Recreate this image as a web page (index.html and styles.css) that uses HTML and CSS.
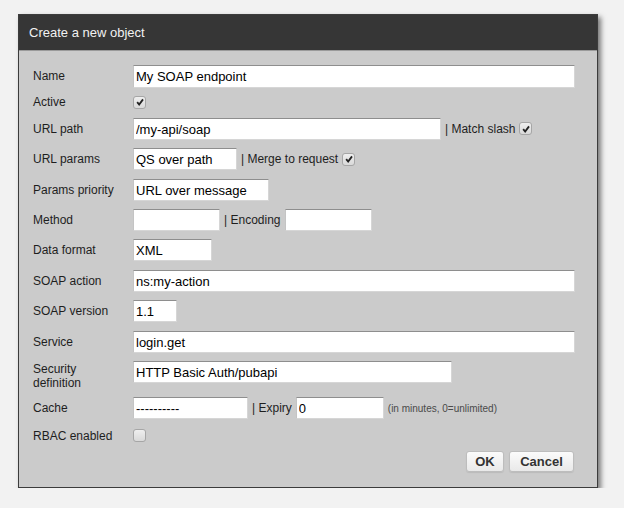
FILE: index.html
```html
<!DOCTYPE html>
<html>
<head>
<meta charset="utf-8">
<link rel="stylesheet" href="styles.css">
</head>
<body>
<div class="dialog">
  <div class="header">Create a new object</div>
  <form class="body">
    <div class="row">
      <label class="lbl">Name</label>
      <input class="inp inp-tall w-full" value="My SOAP endpoint">
    </div>
    <div class="row row-cb">
      <label class="lbl">Active</label>
      <span class="cb"><svg viewBox="0 0 12 12" width="12" height="12"><path d="M2.6 6.2 L5 9 L9.6 2.8" fill="none" stroke="#222" stroke-width="2.2"/></svg></span>
    </div>
    <div class="row">
      <label class="lbl">URL path</label>
      <input class="inp w-path" value="/my-api/soap">
      <span class="sep">| Match slash</span>
      <span class="cb"><svg viewBox="0 0 12 12" width="12" height="12"><path d="M2.6 6.2 L5 9 L9.6 2.8" fill="none" stroke="#222" stroke-width="2.2"/></svg></span>
    </div>
    <div class="row">
      <label class="lbl">URL params</label>
      <input class="inp w-params" value="QS over path">
      <span class="sep">| Merge to request</span>
      <span class="cb"><svg viewBox="0 0 12 12" width="12" height="12"><path d="M2.6 6.2 L5 9 L9.6 2.8" fill="none" stroke="#222" stroke-width="2.2"/></svg></span>
    </div>
    <div class="row">
      <label class="lbl">Params priority</label>
      <input class="inp w-prio" value="URL over message">
    </div>
    <div class="row">
      <label class="lbl">Method</label>
      <input class="inp w-method" value="">
      <span class="sep">| Encoding</span>
      <input class="inp w-method" value="">
    </div>
    <div class="row">
      <label class="lbl">Data format</label>
      <input class="inp w-format" value="XML">
    </div>
    <div class="row">
      <label class="lbl">SOAP action</label>
      <input class="inp w-full" value="ns:my-action">
    </div>
    <div class="row">
      <label class="lbl">SOAP version</label>
      <input class="inp w-ver" value="1.1">
    </div>
    <div class="row">
      <label class="lbl">Service</label>
      <input class="inp w-full" value="login.get">
    </div>
    <div class="row row-top">
      <label class="lbl">Security<br>definition</label>
      <input class="inp w-sec" value="HTTP Basic Auth/pubapi">
    </div>
    <div class="row">
      <label class="lbl">Cache</label>
      <input class="inp w-cache" value="----------">
      <span class="sep">| Expiry</span>
      <input class="inp w-expiry" value="0">
      <span class="hint">(in minutes, 0=unlimited)</span>
    </div>
    <div class="row row-cb2">
      <label class="lbl">RBAC enabled</label>
      <span class="cb"></span>
    </div>
    <div class="buttons">
      <button type="button" class="btn btn-ok">OK</button>
      <button type="button" class="btn btn-cancel">Cancel</button>
    </div>
  </form>
</div>
</body>
</html>
```

FILE: styles.css
```css
html, body {
  margin: 0;
  padding: 0;
  background: #f2f2f2;
  font-family: "Liberation Sans", Arial, sans-serif;
}

.dialog {
  box-sizing: border-box;
  width: 580px;
  margin: 14px 0 0 18px;
  border: 1px solid #3c3c3c;
  background: #cbcbcb;
  box-shadow: 3px 3px 5px rgba(0, 0, 0, 0.5);
}

.header {
  height: 35px;
  display: flex;
  align-items: center;
  padding-left: 10px;
  background: #363636;
  color: #f2f2f2;
  font-size: 13px;
  border-bottom: 1px solid #9a9a9a;
}

.body {
  margin: 0;
  padding: 14px 22px 15px 14px;
}

.row {
  display: flex;
  align-items: center;
  height: 22px;
  margin-bottom: 8.4px;
}

.row-cb {
  height: 14px;
}

.row-cb2 {
  height: 16px;
  margin-bottom: 7px;
}

.row-top {
  height: 28px;
  align-items: flex-start;
}

.lbl {
  flex: none;
  width: 100px;
  font-size: 12px;
  line-height: 14px;
  color: #1e1e1e;
}

.row-top .lbl {
  padding-top: 1px;
}

.inp {
  box-sizing: border-box;
  flex: none;
  height: 22px;
  margin: 0;
  padding: 1px 2px 0;
  font-family: "Liberation Sans", Arial, sans-serif;
  font-size: 13px;
  color: #000;
  background: #fff;
  border: 1px solid #d6d6d6;
  border-top-color: #8e8e8e;
  border-left-color: #c4c4c4;
  border-radius: 0;
  outline: none;
}

.inp-tall {
  height: 23px;
}

.w-full { width: 442px; }
.w-path { width: 308px; }
.w-params { width: 104px; }
.w-prio { width: 136px; }
.w-method { width: 87px; }
.w-format { width: 79px; }
.w-ver { width: 44px; }
.w-sec { width: 319px; }
.w-cache { width: 115px; }
.w-expiry { width: 88px; }

.sep {
  flex: none;
  margin: 0 4px 0 4px;
  font-size: 12px;
  color: #1e1e1e;
}

.hint {
  flex: none;
  margin-left: 4px;
  font-size: 10px;
  color: #4a4a4a;
}

.cb {
  flex: none;
  box-sizing: border-box;
  width: 13px;
  height: 13px;
  border: 1px solid #a6a6a6;
  border-radius: 3px;
  background: linear-gradient(#efefef, #d9d9d9);
  display: flex;
  align-items: center;
  justify-content: center;
}

.cb svg {
  display: block;
  width: 10px;
  height: 10px;
}

.buttons {
  display: flex;
  justify-content: flex-end;
  gap: 5px;
  margin-right: 1px;
}

.btn {
  box-sizing: border-box;
  height: 21px;
  margin: 0;
  padding: 0;
  font-family: "Liberation Sans", Arial, sans-serif;
  font-weight: bold;
  font-size: 13px;
  color: #333;
  background: linear-gradient(#fbfbfb, #e9e9e9);
  border: 1px solid #bdbdbd;
  border-radius: 3px;
  box-shadow: 0 1px 1px rgba(0, 0, 0, 0.08);
}

.btn-ok {
  width: 38px;
}

.btn-cancel {
  width: 65px;
}
```
